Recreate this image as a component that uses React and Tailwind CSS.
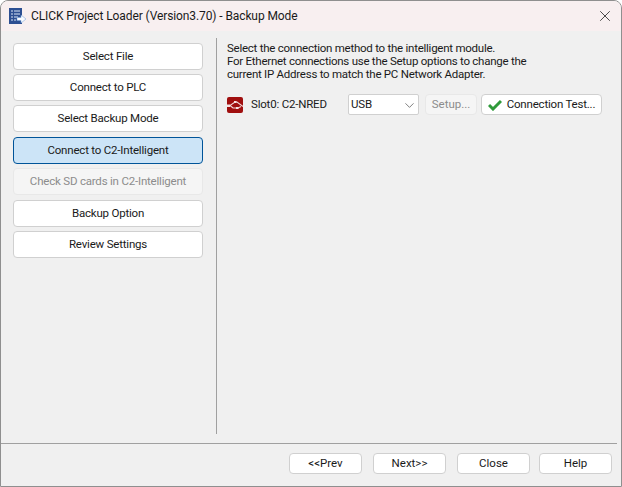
import { X, ChevronDown } from 'lucide-react'

const steps = [
  { label: 'Select File' },
  { label: 'Connect to PLC' },
  { label: 'Select Backup Mode' },
  { label: 'Connect to C2-Intelligent', active: true, className: 'mt-[1px]' },
  { label: 'Check SD cards in C2-Intelligent', disabled: true },
  { label: 'Backup Option', className: 'mt-[1px]' },
  { label: 'Review Settings' },
]

function StepButton({ label, active, disabled, className }) {
  let look = 'bg-white border-[#d0d0d0] text-[#1a1a1a]'
  if (active) look = 'bg-[#cce4f7] border-[#005499] text-[#1a1a1a]'
  if (disabled) look = 'bg-[#f5f5f5] border-[#e8e8e8] text-[#8c8c8c]'
  return (
    <div className={`flex h-[27px] w-[190px] items-center justify-center rounded-[4px] border pt-px ${look} ${className || ''}`}>
      {label}
    </div>
  )
}

function FooterButton({ label, className }) {
  return (
    <div className={`flex h-[21px] w-[73px] items-center justify-center rounded-[4px] border border-[#d0d0d0] bg-white pt-px tracking-normal text-[#1a1a1a] ${className || ''}`}>
      {label}
    </div>
  )
}

function AppIcon() {
  return (
    <svg width="17" height="16" viewBox="0 0 17 16" className="shrink-0">
      <rect x="0" y="0" width="13" height="16" fill="#2d4f92" />
      <path d="M2 3h2M5 3h6M2 6h2M5 6h6M2 9h2M5 9h4M2 12h2M5 12h2" stroke="#dbe6f5" strokeWidth="1" />
      <path d="M8 9.5h4V7l5 4-5 4v-2.500H8z" fill="#f8fbff" stroke="#6f9bd4" strokeWidth="0.5" />
    </svg>
  )
}

function ModuleIcon() {
  return (
    <svg width="16" height="16" viewBox="0 0 16 16" className="shrink-0">
      <rect x="0" y="0" width="16" height="16" rx="2" fill="#a00f0f" />
      <path d="M0 8.500h3L8 5h2l6 4.500M3 8.500l3 2.500h5l3-1.500" stroke="#f1d5d5" strokeWidth="1.100" fill="none" />
      <rect x="0" y="7.500" width="3" height="2.500" fill="#f6e4e4" />
      <rect x="7" y="4" width="2.500" height="2" fill="#f6e4e4" />
      <rect x="9" y="10" width="2.500" height="2" fill="#f6e4e4" />
    </svg>
  )
}

export default function App() {
  return (
    <div className="flex h-[487px] w-[622px] flex-col overflow-hidden rounded-t-[8px] border border-[#8f8f8f] bg-[#f0f0f0] font-['Roboto','Noto_Sans',sans-serif] text-[11.5px] tracking-[-0.2px] text-[#1a1a1a]">
      <div className="flex h-[30px] shrink-0 items-center bg-[#f8eff0] pl-[8px] pr-[7px]">
        <AppIcon />
        <span className="ml-[5px] flex-1 text-[12px] tracking-[-0.1px] text-[#1a1a1a]">CLICK Project Loader (Version3.70) - Backup Mode</span>
        <X size={18} strokeWidth={1} className="text-[#111]" />
      </div>

      <div className="flex min-h-0 flex-1 pt-[7px]">
        <div className="flex h-[396px] w-[216px] shrink-0 flex-col gap-[4px] border-r border-[#a0a0a0] pl-[12px] pt-[5px]">
          {steps.map((step) => (
            <StepButton key={step.label} {...step} />
          ))}
        </div>

        <div className="flex-1 pl-[10px] pt-[4px]">
          <p className="leading-[13px] tracking-[-0.25px]">
            Select the connection method to the intelligent module.<br />
            For Ethernet connections use the Setup options to change the<br />
            current IP Address to match the PC Network Adapter.
          </p>
          <div className="mt-[13px] flex items-center">
            <ModuleIcon />
            <span className="ml-[8px] w-[97px]">Slot0: C2-NRED</span>
            <div className="flex h-[21px] w-[71px] items-center justify-between rounded-[2px] border border-[#d0d0d0] bg-white pl-[2px] pr-[1px] pt-px">
              USB
              <ChevronDown size={15} strokeWidth={1} className="text-[#333]" />
            </div>
            <div className="ml-[6px] flex h-[21px] w-[52px] items-center justify-center rounded-[4px] border border-[#e8e8e8] bg-[#f5f5f5] tracking-normal text-[#8c8c8c]">
              Setup...
            </div>
            <div className="ml-[4px] flex h-[21px] w-[121px] items-center justify-center rounded-[4px] border border-[#d0d0d0] bg-white">
              <svg width="14" height="12" viewBox="0 0 14 12" className="mr-[5px]">
                <path d="M1 6l4 4L13 2" stroke="#2f9a3a" strokeWidth="3" fill="none" />
              </svg>
              Connection Test...
            </div>
          </div>
        </div>
      </div>

      <div className="mr-[4px] flex h-[43px] shrink-0 justify-end border-t border-[#a0a0a0] pt-[9px] pr-[5px]">
        <FooterButton label="<<Prev" />
        <FooterButton label="Next>>" className="ml-[11px]" />
        <FooterButton label="Close" className="ml-[11px]" />
        <FooterButton label="Help" className="ml-[9px]" />
      </div>
    </div>
  )
}
